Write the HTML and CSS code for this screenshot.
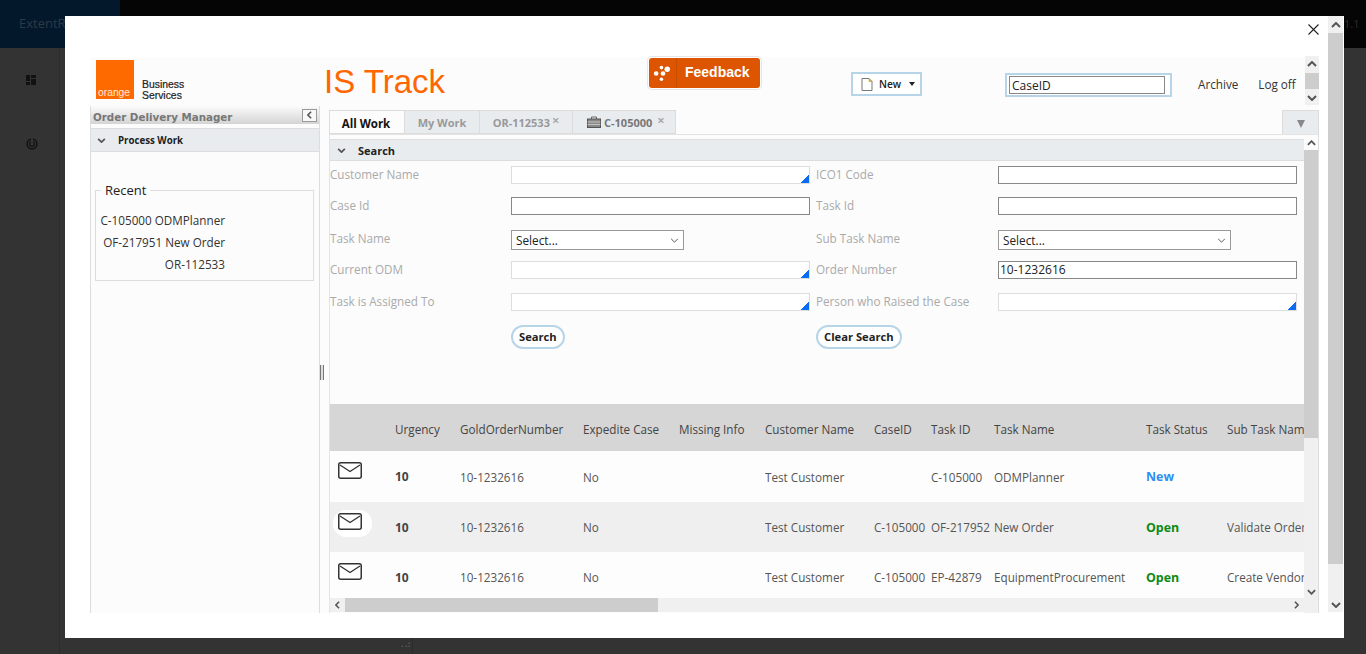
FILE: index.html
```html
<!DOCTYPE html>
<html lang="en">
<head>
<meta charset="utf-8">
<title>IS Track</title>
<link rel="stylesheet" href="styles.css">
</head>
<body>
<svg class="defs" width="0" height="0">
  <symbol id="chev-up" viewBox="0 0 10 6"><path d="M1 5 L5 1 L9 5" fill="none" stroke="#555" stroke-width="2"/></symbol>
  <symbol id="chev-down" viewBox="0 0 10 6"><path d="M1 1 L5 5 L9 1" fill="none" stroke="#555" stroke-width="2"/></symbol>
  <symbol id="chev-thin" viewBox="0 0 10 6"><path d="M1 1 L5 5 L9 1" fill="none" stroke="#555" stroke-width="1.2"/></symbol>
  <symbol id="chev-left" viewBox="0 0 6 10"><path d="M5 1 L1 5 L5 9" fill="none" stroke="#555" stroke-width="2"/></symbol>
  <symbol id="chev-right" viewBox="0 0 6 10"><path d="M1 1 L5 5 L1 9" fill="none" stroke="#555" stroke-width="2"/></symbol>
  <symbol id="mail" viewBox="0 0 24 17"><rect x="0.75" y="0.75" width="22.5" height="15.5" rx="2" fill="#fff" stroke="#333" stroke-width="1.5"/><path d="M2 3 L12 9.5 L22 3" fill="none" stroke="#333" stroke-width="1.3"/></symbol>
</svg>

<header class="topbar">
  <div class="brand">ExtentReports</div>
  <div class="topbar-fill"></div>
  <div class="version">1.1</div>
</header>
<div class="backdrop">
  <nav class="rail">
    <svg class="rail-icon" width="10" height="10" viewBox="0 0 10 10"><path d="M0 0h4v6H0zM5 0h5v3H5zM0 7h4v3H0zM5 4h5v6H5z" fill="#111"/></svg>
    <svg class="rail-icon" width="12" height="12" viewBox="0 0 12 12"><circle cx="6" cy="6" r="5" fill="none" stroke="#111" stroke-width="1.4"/><circle cx="6" cy="6" r="2.4" fill="none" stroke="#111" stroke-width="1.2"/><path d="M6 6 L6 0" stroke="#333" stroke-width="2"/></svg>
  </nav>
  <div class="grip">⠠⠴</div>
</div>

<div class="modal">
  <div class="modal-main">
    <button class="close" aria-label="Close"><svg width="11" height="11" viewBox="0 0 11 11"><path d="M0.5 0.5 L10.5 10.5 M10.5 0.5 L0.5 10.5" stroke="#222" stroke-width="1.1"/></svg></button>
    <div class="app">
      <div class="app-head">
        <div class="logo-block">
          <div class="logo-square"><span class="logo-word">orange</span></div>
          <div class="logo-text">Business<br>Services</div>
        </div>
        <div class="app-title">IS Track</div>
        <div class="feedback">
          <svg class="feedback-icon" width="19" height="17" viewBox="0 0 18 16"><g fill="#fff"><circle cx="13.5" cy="4" r="2.6"/><circle cx="8" cy="2.4" r="1.7"/><circle cx="9.5" cy="8" r="2.2"/><circle cx="3" cy="8" r="2.2"/><circle cx="8" cy="13.5" r="1.7"/></g></svg>
          <span>Feedback</span>
        </div>
        <div class="new-btn">
          <svg width="12" height="13" viewBox="0 0 12 13"><path d="M1 .5h7l3 3v9H1z" fill="#fff" stroke="#777"/><path d="M8 .5v3h3z" fill="#e9b64e" stroke="#b98a2c" stroke-width=".5"/></svg>
          <span>New</span>
          <i class="caret"></i>
        </div>
        <div class="case-box"><div class="case-input">CaseID</div></div>
        <a class="head-link archive">Archive</a>
        <a class="head-link logoff">Log off</a>
        <div class="head-scroll">
          <svg class="arrow-h" width="10" height="6"><use href="#chev-up"/></svg>
          <div class="head-thumb"></div>
          <svg class="arrow-h" width="10" height="6"><use href="#chev-down"/></svg>
        </div>
      </div>

      <div class="panels">
        <aside class="left">
          <div class="left-title">
            <span>Order Delivery Manager</span>
            <div class="collapse"><svg width="5" height="8"><use href="#chev-left"/></svg></div>
          </div>
          <div class="process-bar">
            <svg width="9" height="5"><use href="#chev-down"/></svg>
            <span>Process Work</span>
          </div>
          <fieldset class="recent">
            <legend>Recent</legend>
            <div class="recent-row">C-105000 ODMPlanner</div>
            <div class="recent-row">OF-217951 New Order</div>
            <div class="recent-row">OR-112533</div>
          </fieldset>
        </aside>
        <div class="splitter"><i></i></div>
        <section class="right">
          <div class="tabs">
            <div class="tab active">All Work</div>
            <div class="tab tab-my">My Work</div>
            <div class="tab tab-or">OR-112533<b>×</b></div>
            <div class="tab tab-case">
              <svg width="14" height="12" viewBox="0 0 14 12"><path d="M4.5 3V1h5v2" fill="none" stroke="#666"/><rect x=".5" y="3" width="13" height="8.5" fill="#888" stroke="#555"/><path d="M.5 6h13M.5 8.5h13" stroke="#ddd" stroke-width=".7"/></svg>
              C-105000<b>×</b>
            </div>
            <div class="tab-spacer"></div>
            <div class="tab-menu"><i></i></div>
          </div>
          <div class="work">
            <div class="work-main">
              <div class="search-bar">
                <svg width="9" height="5"><use href="#chev-down"/></svg>
                <span>Search</span>
              </div>
              <form class="search-form">
                <label>Customer Name</label><div class="field lookup"></div>
                <label>ICO1 Code</label><div class="field"></div>
                <label>Case Id</label><div class="field"></div>
                <label>Task Id</label><div class="field"></div>
                <label>Task Name</label><div class="select sel-a"><span>Select...</span><svg width="9" height="5"><use href="#chev-thin"/></svg></div>
                <label>Sub Task Name</label><div class="select sel-b"><span>Select...</span><svg width="9" height="5"><use href="#chev-thin"/></svg></div>
                <label>Current ODM</label><div class="field lookup"></div>
                <label>Order Number</label><div class="field">10-1232616</div>
                <label>Task is Assigned To</label><div class="field lookup"></div>
                <label>Person who Raised the Case</label><div class="field lookup"></div>
                <span></span><div class="btn-cell"><button type="button" class="pill">Search</button></div>
                <div class="btn-cell"><button type="button" class="pill">Clear Search</button></div><span></span>
              </form>
              <div class="table-wrap">
                <table class="grid">
                  <colgroup>
                    <col class="c-a"><col class="c-b"><col class="c-c"><col class="c-d"><col class="c-e"><col class="c-f"><col class="c-g"><col class="c-h"><col class="c-i"><col class="c-j"><col class="c-k">
                  </colgroup>
                  <thead>
                    <tr><th></th><th>Urgency</th><th>GoldOrderNumber</th><th>Expedite Case</th><th>Missing Info</th><th>Customer Name</th><th>CaseID</th><th>Task ID</th><th>Task Name</th><th>Task Status</th><th>Sub Task Name</th></tr>
                  </thead>
                  <tbody>
                    <tr class="r1"><td class="mail-cell"><div class="mail-wrap"><svg width="24" height="17"><use href="#mail"/></svg></div></td><td class="bold">10</td><td>10-1232616</td><td>No</td><td></td><td>Test Customer</td><td></td><td>C-105000</td><td>ODMPlanner</td><td class="st-new">New</td><td></td></tr>
                    <tr class="r2"><td class="mail-cell"><div class="mail-wrap pill-bg"><svg width="24" height="17"><use href="#mail"/></svg></div></td><td class="bold">10</td><td>10-1232616</td><td>No</td><td></td><td>Test Customer</td><td>C-105000</td><td>OF-217952</td><td>New Order</td><td class="st-open">Open</td><td>Validate Order</td></tr>
                    <tr class="r3"><td class="mail-cell"><div class="mail-wrap"><svg width="24" height="17"><use href="#mail"/></svg></div></td><td class="bold">10</td><td>10-1232616</td><td>No</td><td></td><td>Test Customer</td><td>C-105000</td><td>EP-42879</td><td>EquipmentProcurement</td><td class="st-open">Open</td><td>Create Vendor</td></tr>
                  </tbody>
                </table>
              </div>
              <div class="hscroll">
                <div class="hbtn hbtn-left"><svg width="5" height="8"><use href="#chev-left"/></svg></div>
                <div class="hthumb"></div>
                <div class="hfill"></div>
                <div class="hbtn"><svg width="5" height="8"><use href="#chev-right"/></svg></div>
              </div>
            </div>
            <div class="vscroll">
              <div class="vbtn-top"><svg width="9" height="6"><use href="#chev-up"/></svg></div>
              <div class="vthumb"></div>
              <div class="vfill"></div>
              <div class="vbtn-bot"><svg width="9" height="6"><use href="#chev-down"/></svg></div>
            </div>
          </div>
        </section>
      </div>
    </div>
  </div>
  <div class="modal-scroll">
    <div class="ms-top"><svg width="10" height="6"><use href="#chev-up"/></svg></div>
    <div class="ms-thumb"></div>
    <div class="ms-fill"><svg width="10" height="6"><use href="#chev-down"/></svg></div>
  </div>
</div>
</body>
</html>
```

FILE: styles.css
```css
* { box-sizing: border-box; }
html, body { margin: 0; padding: 0; }
body {
  width: 1366px;
  height: 654px;
  overflow: hidden;
  background: #333;
  font-family: "Open Sans", "Liberation Sans", sans-serif;
  font-size: 11.7px;
  color: #333;
  display: flex;
  flex-direction: column;
}
.defs { position: absolute; }
svg { display: block; flex: none; }

/* page behind the modal */
.topbar { height: 48px; display: flex; background: #050505; flex: none; }
.brand { width: 120px; background: #04182b; color: #2c3a46; padding: 14px 0 0 19px; font-size: 13px; white-space: nowrap; overflow: hidden; }
.topbar-fill { flex: 1; }
.version { width: 66px; padding: 16px 0 0 44px; color: #2e2e2e; font-size: 11px; }
.backdrop { flex: 1; display: flex; position: relative; }
.rail { width: 60px; border-right: 1px solid #2c2c2c; padding: 27px 0 0 26px; display: flex; flex-direction: column; gap: 53px; }
.grip { position: absolute; left: 397px; bottom: 0; width: 16px; height: 16px; border-right: 1px solid #2c2c2c; color: #555; font-size: 10px; line-height: 12px; }

/* modal */
.modal { position: absolute; left: 65px; top: 16px; width: 1279px; height: 622px; background: #fff; display: flex; }
.modal-main { width: 1263px; padding: 41px 9px 25px 25px; position: relative; }
.close { position: absolute; right: 9px; top: 8px; width: 11px; height: 11px; padding: 0; border: 0; background: none; }
.modal-scroll { width: 15px; height: 596px; display: flex; flex-direction: column; background: #f0f0f0; }
.ms-top { height: 17px; display: flex; justify-content: center; align-items: center; }
.ms-thumb { height: 531px; background: #cdcdcd; }
.ms-fill { flex: 1; display: flex; justify-content: center; align-items: flex-end; padding-bottom: 4px; }

.app { width: 1229px; height: 556px; background: #fcfcfc; display: flex; flex-direction: column; }

/* app header */
.app-head { height: 49px; display: flex; flex: none; align-items: flex-start; }
.logo-block { width: 234px; padding: 3px 0 0 6px; display: flex; flex: none; }
.logo-square { width: 38px; height: 39px; background: #ff6a00; display: flex; align-items: flex-end; padding: 0 0 1px 2px; }
.logo-word { color: #ffe8d8; font-family: "Liberation Sans", sans-serif; font-size: 10.3px; line-height: 11px; }
.logo-text { margin: 20px 0 0 8px; font-family: "Liberation Sans", sans-serif; font-size: 10.4px; line-height: 10.5px; color: #222; -webkit-text-stroke: .2px #222; }
.app-title { width: 325px; flex: none; margin-top: 4px; font-family: "Liberation Sans", sans-serif; font-size: 33px; line-height: 42px; color: #ff6600; white-space: nowrap; }
.feedback { width: 111px; height: 30px; margin-top: 1px; flex: none; border-radius: 3px; background: #dd5500; box-shadow: 0 0 0 1px #fff, 0 0 0 2px #e6e6e6; display: flex; align-items: center; color: #fff; font-weight: 700; font-size: 14px; font-family: "Liberation Sans", sans-serif; }
.feedback-icon { margin: 0 4px 0 4px; }
.feedback span { border-left: 1px solid #c94d00; padding-left: 8px; height: 100%; line-height: 28px; }
.new-btn { width: 71px; height: 24px; margin: 15px 0 0 91px; flex: none; border: 2px solid #b6d5e8; background: #fff; display: flex; align-items: center; padding-left: 8px; gap: 6px; font-size: 10.2px; font-weight: 600; color: #222; }
.caret { width: 0; height: 0; border: 3.5px solid transparent; border-top: 4px solid #222; border-bottom: 0; margin-left: 2px; }
.case-box { width: 167px; height: 24px; margin: 16px 0 0 83px; flex: none; border: 2px solid #b6d5e8; padding: 1px 5px 1px 2px; background: #fff; }
.case-input { height: 18px; border: 1px solid #888; padding-left: 2px; line-height: 17px; font-size: 12px; color: #222; }
.head-link { margin-top: 18px; font-size: 11.7px; line-height: 18px; color: #333; flex: none; }
.archive { margin-left: 26px; }
.logoff { margin-left: 20px; }
.head-scroll { width: 14px; height: 49px; margin: -1px 0 0 auto; flex: none; background: #f0f0f0; display: flex; flex-direction: column; align-items: center; justify-content: space-between; padding-top: 5px; padding-bottom: 4px; }
.head-thumb { width: 14px; height: 16px; background: #cdcdcd; }
.arrow-h { width: 10px; height: 6px; }

/* panels */
.panels { flex: 1; display: flex; min-height: 0; }
.left { width: 230px; flex: none; border-left: 1px solid #ddd; border-right: 1px solid #ddd; }
.left-title { height: 18px; background: linear-gradient(#fbfbfb, #d4d4d4); display: flex; align-items: center; justify-content: space-between; padding: 0 2px 0 2px; }
.left-title span { font-family: "DejaVu Sans", sans-serif; font-size: 10.3px; font-weight: 700; color: #777; padding-top: 4px; white-space: nowrap; }
.collapse { width: 15px; height: 13px; border: 1px solid #999; background: #f8f8f8; display: flex; align-items: center; justify-content: center; }
.process-bar { height: 24px; margin-top: 4px; background: #e9ecef; border-top: 1px solid #ddd; border-bottom: 1px solid #ddd; display: flex; align-items: center; padding: 1px 0 0 6px; gap: 12px; font-weight: 700; font-size: 9.7px; color: #222; }
.recent { margin: 31px 5px 0 4px; padding: 11px 88px 5px 0; border: 1px solid #ddd; min-width: 0; }
.recent legend { margin-left: 5px; padding: 0 4px; font-size: 13px; line-height: 15px; color: #222; }
.recent-row { text-align: right; height: 22px; line-height: 22px; color: #333; white-space: nowrap; }
.splitter { width: 9px; flex: none; padding: 259px 0 0 0; }
.splitter i { display: block; width: 4px; height: 15px; border-left: 1px solid #777; border-right: 1px solid #777; background: #ddd; }

/* right */
.right { flex: 1; min-width: 0; display: flex; flex-direction: column; }
.tabs { height: 29px; flex: none; padding-top: 4px; display: flex; border-bottom: 1px solid #e4e4e4; }
.tab { height: 24px; background: #e9ecef; border: 1px solid #dcdcdc; border-left: 0; display: flex; align-items: center; justify-content: center; font-weight: 700; font-size: 11px; color: #999; white-space: nowrap; }
.tab b { font-size: 13px; color: #aaa; margin: -4px 0 0 2px; font-weight: 700; }
.tab.active { width: 76px; background: #fcfcfc; color: #111; border-left: 1px solid #dcdcdc; font-size: 11.5px; padding: 2px 2px 0 0; }
.tab-my { width: 75px; }
.tab-or { width: 93px; }
.tab-case { width: 103px; gap: 3px; color: #777; justify-content: flex-start; padding-left: 14px; }
.tab-spacer { flex: 1; }
.tab-menu { width: 37px; height: 24px; background: #e9ecef; border: 1px solid #dcdcdc; border-bottom: 0; display: flex; align-items: center; justify-content: center; padding-top: 3px; }
.tab-menu i { width: 0; height: 0; border: 4px solid transparent; border-top: 8px solid #888; border-bottom: 0; }
.work { flex: 1; min-height: 0; display: flex; border-right: 1px solid #ddd; }
.work-main { width: 975px; flex: none; display: flex; flex-direction: column; border-left: 1px solid #e4e4e4; padding: 4px 0 1px; }
.search-bar { height: 22px; flex: none; background: #e9ecef; border-top: 1px solid #ddd; border-bottom: 1px solid #ddd; display: flex; align-items: center; padding-left: 7px; gap: 12px; font-weight: 700; font-size: 11px; color: #222; }
.search-form { height: 243px; flex: none; padding: 5px 0 0 0; display: grid; grid-template-columns: 181px 305px 182px 299px; grid-template-rows: 31px 33px 31px 32px 32px 32px; align-items: start; }
.search-form label { color: #aaa; font-size: 11.7px; line-height: 16px; white-space: nowrap; }
.field { height: 18px; width: 299px; border: 1px solid #888; background: #fff; padding-left: 1px; line-height: 16px; font-size: 12px; color: #222; }
.lookup { border-color: #ddd; background: #fff linear-gradient(135deg, transparent 50%, #0b6cf2 50%) no-repeat right bottom / 9px 9px; }
.select { height: 20px; border: 1px solid #999; background: #fff; display: flex; align-items: center; justify-content: space-between; padding: 0 4px 0 4px; font-size: 11.8px; color: #222; }
.sel-a { width: 173px; }
.sel-b { width: 233px; }
.btn-cell { height: 24px; }
.pill { height: 24px; padding: 0 6px 2px; border: 2px solid #b6d5e8; border-radius: 12px; background: #fff; font-family: inherit; font-size: 11.2px; font-weight: 700; color: #222; }
.table-wrap { flex: 1; min-height: 0; overflow: hidden; }
.grid { table-layout: fixed; width: 975px; border-collapse: collapse; }
.c-a { width: 65px; } .c-b { width: 65px; } .c-c { width: 123px; } .c-d { width: 96px; }
.c-e { width: 86px; } .c-f { width: 109px; } .c-g { width: 57px; } .c-h { width: 63px; }
.c-i { width: 152px; } .c-j { width: 81px; } .c-k { width: 78px; }
.grid th { height: 47px; background: #d6d6d6; text-align: left; padding: 3px 0 0; font-weight: 400; color: #444; white-space: nowrap; overflow: hidden; }
.grid td { padding: 0; color: #555; white-space: nowrap; overflow: hidden; }
.r1 td { height: 51px; background: #fdfdfd; }
.r2 td { height: 50px; background: #efefef; }
.r3 td { height: 50px; background: #fdfdfd; }
.mail-cell { vertical-align: top; }
.mail-wrap { width: 39px; height: 27px; margin: 8px 0 0 3px; padding: 3px 0 0 5px; }
.pill-bg { background: #fff; border-radius: 13px; }
.bold { font-weight: 700; font-size: 12px; color: #444 !important; }
.st-new { color: #2f8ff0 !important; font-weight: 700; font-size: 12.4px; }
.st-open { color: #0c8a12 !important; font-weight: 700; font-size: 12.4px; }
.hscroll { height: 14px; flex: none; display: flex; background: #f0f0f0; }
.hbtn { width: 16px; display: flex; align-items: center; justify-content: center; }
.hbtn-left { width: 15px; }
.hthumb { width: 313px; background: #cdcdcd; }
.hfill { flex: 1; }
.vscroll { width: 14px; flex: none; display: flex; flex-direction: column; background: #f0f0f0; }
.vbtn-top { height: 15px; display: flex; align-items: center; justify-content: center; background: #fcfcfc; }
.vthumb { height: 288px; background: #cdcdcd; }
.vfill { flex: 1; }
.vbtn-bot { height: 30px; padding-top: 6px; display: flex; justify-content: center; }
```
